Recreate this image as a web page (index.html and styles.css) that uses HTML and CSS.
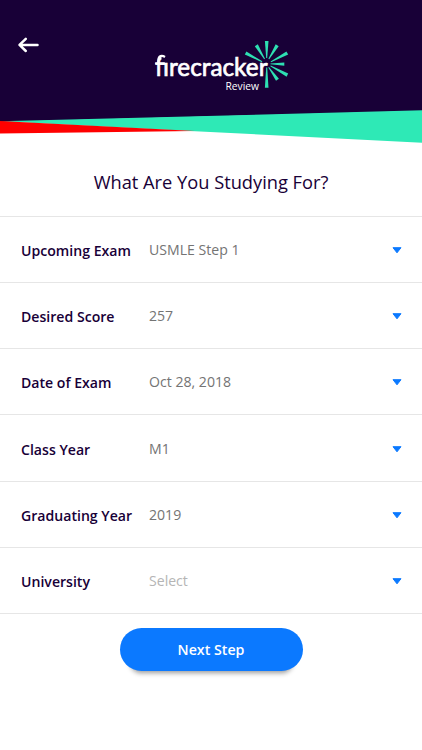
FILE: index.html
```html
<!DOCTYPE html>
<html lang="en">
<head>
<meta charset="utf-8">
<title>Firecracker Review</title>
<link rel="stylesheet" href="styles.css">
</head>
<body>
<header class="header">
  <svg class="header-art" width="422" height="150" viewBox="0 0 422 150">
    <path fill="#180037" d="M0 0H422V111L0 122Z"/>
    <path fill="#2ee9b6" d="M0 121.300L422 110.300V142.700L190 131Z"/>
    <path fill="#ff0000" d="M0 121L195 131L0 133.500Z"/>
    <path d="M37.500 44.900H20M25.800 38.800L19.500 44.900L25.800 51" fill="none" stroke="#fff" stroke-width="2.500" stroke-linecap="round" stroke-linejoin="round"/>
    <g fill="#2edfb3">
      <path d="M264.900 41H268.500L267.200 58H266.200Z"/>
      <path d="M254.800 46.200L257.800 44.300L265 58.800L264.200 59.300Z"/>
      <path d="M244.800 54.400L246.400 51.400L262.300 61.300L261.800 62.200Z"/>
      <path d="M275.700 44.300L278.700 46.200L269.200 59.300L268.400 58.800Z"/>
      <path d="M286.400 51.400L288.200 54.400L271 62.300L270.600 61.400Z"/>
      <path d="M284.300 62.500V65.700L270.500 64.300V63.600Z"/>
      <path d="M288.200 73.500L286.600 76.800L270.300 66.200L270.700 65.400Z"/>
      <path d="M278.900 78.700L276 80.700L268.300 67.600L269 67.100Z"/>
      <path d="M264.900 87.700H268.500L267.200 67.500H266.200Z"/>
    </g>
    <text class="brand" x="155" y="75.600" textLength="112.500" lengthAdjust="spacingAndGlyphs">firecracker</text>
    <path d="M161.500 54H168V61H161.500Z" fill="#180037"/>
    <path d="M158.400 64V60.500C158.400 55.300 162 55.200 165 56.900M155.300 63.300H164.800" fill="none" stroke="#fff" stroke-width="2.300"/>
    <text class="brand-sub" x="225.500" y="89.600" textLength="33.500" lengthAdjust="spacingAndGlyphs">Review</text>
  </svg>
</header>
<main>
  <h1 class="title">What Are You Studying For?</h1>
  <div class="rows">
    <div class="row"><span class="label">Upcoming Exam</span><span class="value">USMLE Step 1</span><svg class="caret" viewBox="0 0 10 7"><path d="M1 .7H9L5 5.800Z"/></svg></div>
    <div class="row"><span class="label">Desired Score</span><span class="value">257</span><svg class="caret" viewBox="0 0 10 7"><path d="M1 .7H9L5 5.800Z"/></svg></div>
    <div class="row"><span class="label">Date of Exam</span><span class="value">Oct 28, 2018</span><svg class="caret" viewBox="0 0 10 7"><path d="M1 .7H9L5 5.800Z"/></svg></div>
    <div class="row"><span class="label">Class Year</span><span class="value">M1</span><svg class="caret" viewBox="0 0 10 7"><path d="M1 .7H9L5 5.800Z"/></svg></div>
    <div class="row"><span class="label">Graduating Year</span><span class="value">2019</span><svg class="caret" viewBox="0 0 10 7"><path d="M1 .7H9L5 5.800Z"/></svg></div>
    <div class="row"><span class="label">University</span><span class="value placeholder">Select</span><svg class="caret" viewBox="0 0 10 7"><path d="M1 .7H9L5 5.800Z"/></svg></div>
  </div>
  <button class="next">Next Step</button>
</main>
</body>
</html>
```

FILE: styles.css
```css
* { box-sizing: border-box; }
body {
  margin: 0;
  height: 750px;
  overflow: hidden;
  background: #fff;
  color: #180037;
  font-family: "Open Sans", sans-serif;
}
.header { height: 150px; }
.header-art { display: block; }
.brand { font: 400 25.5px Lato, sans-serif; fill: #fff; stroke: #fff; stroke-width: .7px; }
.brand-sub { font: 500 10.5px "Open Sans", sans-serif; fill: #fff; }
.title {
  margin: 0;
  height: 66px;
  padding-top: 19px;
  line-height: 26px;
  font-size: 18.25px;
  font-weight: 400;
  text-align: center;
}
.rows { border-top: 1px solid #e6e6e6; }
.row {
  display: flex;
  align-items: center;
  height: 66.17px;
  padding: 0 20px 0 21px;
  border-bottom: 1px solid #e6e6e6;
}
.label { width: 128px; padding-top: 2px; font-size: 14.1px; font-weight: 600; white-space: nowrap; }
.value { flex: 1; font-size: 14.1px; color: #747474; }
.placeholder { color: #b5b5b5; }
.caret { width: 10px; height: 7px; margin-top: 2px; fill: #0b79ff; stroke: #0b79ff; stroke-width: 1; stroke-linejoin: round; }
.next {
  display: block;
  width: 183px;
  height: 43px;
  margin: 14.500px auto 0;
  padding: 0;
  border: 0;
  border-radius: 22px;
  background: #0b79ff;
  box-shadow: 0 12px 5px -10px rgba(0, 0, 0, .4);
  color: #fff;
  font: 600 14.2px "Open Sans", sans-serif;
}
```
